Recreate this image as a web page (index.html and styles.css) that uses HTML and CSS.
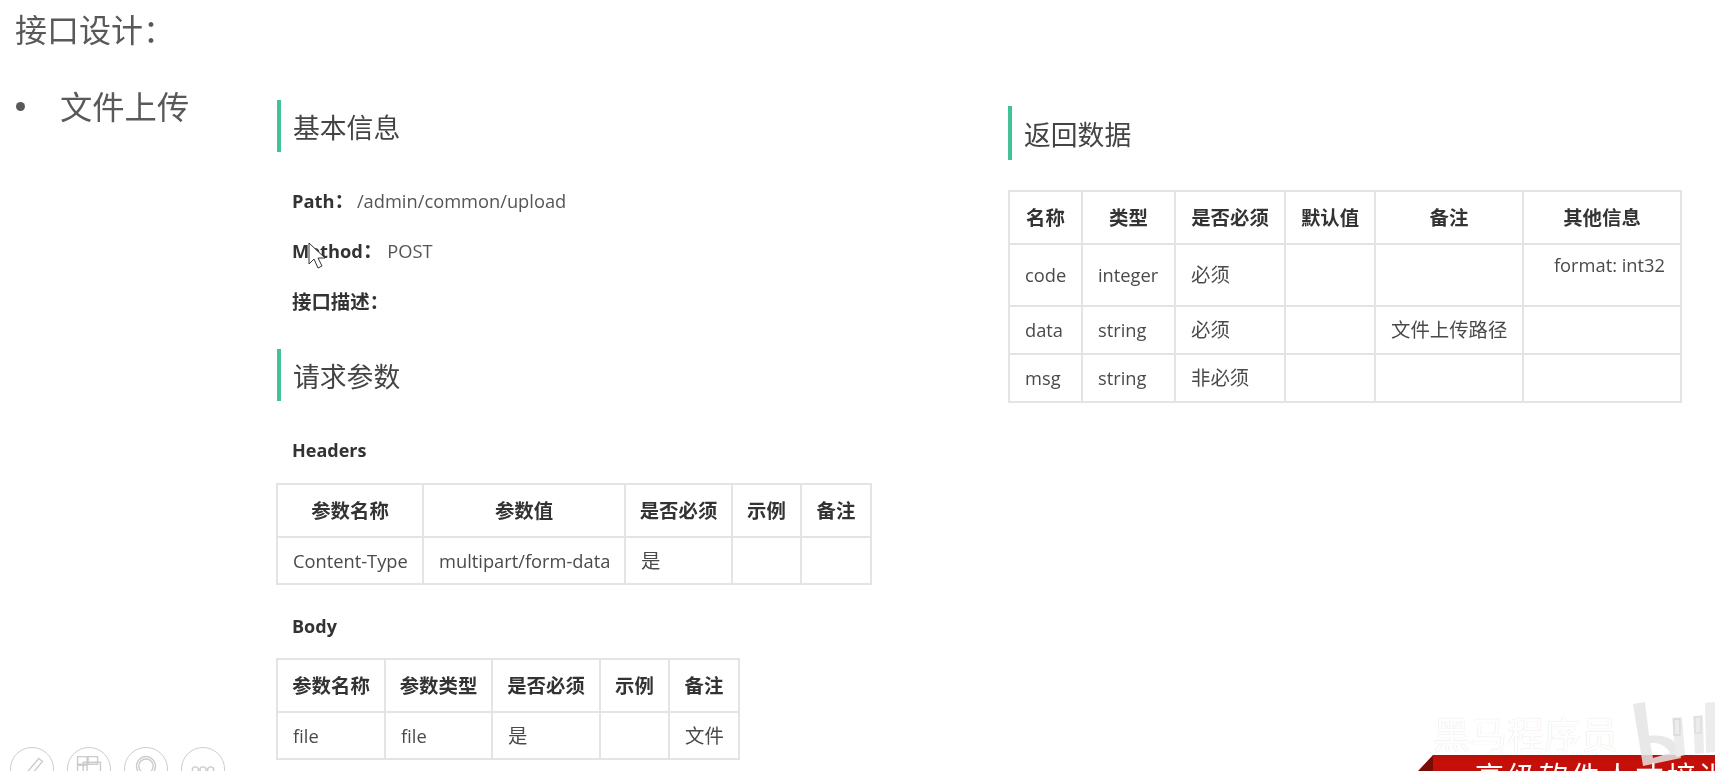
FILE: index.html
```html
<!DOCTYPE html>
<html lang="zh-CN">
<head>
<meta charset="utf-8">
<title>接口设计</title>
<link rel="stylesheet" href="styles.css">
</head>
<body>
<main class="slide">
  <div class="content">
    <h1 class="slide-title">接口设计：</h1>
    <div class="slide-body">
      <aside class="outline">
        <span class="bullet"></span>
        <span class="outline-text">文件上传</span>
      </aside>
      <section class="doc doc-left">
        <h2 class="doc-heading">基本信息</h2>
        <p class="line first"><b>Path<span class="zh">：</span></b><span class="val">/admin/common/upload</span></p>
        <p class="line"><b>Method<span class="zh">：</span></b><span class="val wide">POST</span></p>
        <p class="line last"><b class="zh">接口描述：</b></p>
        <h2 class="doc-heading second">请求参数</h2>
        <p class="sub"><b>Headers</b></p>
        <table class="grid t-headers">
          <colgroup><col class="h1"><col class="h2"><col class="h3"><col class="h4"><col class="h5"></colgroup>
          <thead><tr><th>参数名称</th><th>参数值</th><th>是否必须</th><th>示例</th><th>备注</th></tr></thead>
          <tbody><tr><td>Content-Type</td><td>multipart/form-data</td><td class="zh">是</td><td></td><td></td></tr></tbody>
        </table>
        <p class="sub body-label"><b>Body</b></p>
        <table class="grid t-body">
          <colgroup><col class="b1"><col class="b2"><col class="b3"><col class="b4"><col class="b5"></colgroup>
          <thead><tr><th>参数名称</th><th>参数类型</th><th>是否必须</th><th>示例</th><th>备注</th></tr></thead>
          <tbody><tr><td>file</td><td>file</td><td class="zh">是</td><td></td><td class="zh">文件</td></tr></tbody>
        </table>
      </section>
      <section class="doc doc-right">
        <h2 class="doc-heading">返回数据</h2>
        <table class="grid t-return">
          <colgroup><col class="r1"><col class="r2"><col class="r3"><col class="r4"><col class="r5"><col class="r6"></colgroup>
          <thead><tr><th>名称</th><th>类型</th><th>是否必须</th><th>默认值</th><th>备注</th><th>其他信息</th></tr></thead>
          <tbody>
            <tr class="tall"><td>code</td><td>integer</td><td class="zh">必须</td><td></td><td></td><td class="top">format: int32</td></tr>
            <tr><td>data</td><td>string</td><td class="zh">必须</td><td></td><td class="zh">文件上传路径</td><td></td></tr>
            <tr><td>msg</td><td>string</td><td class="zh">非必须</td><td></td><td></td><td></td></tr>
          </tbody>
        </table>
      </section>
    </div>
  </div>

  <svg class="cursor" width="20" height="30" viewBox="0 0 20 30" aria-hidden="true"><path d="M1 1v21l5-5 4 9 4-2-4-8h7z" fill="#fff" stroke="#333" stroke-width="1"/></svg>

  <div class="tools" aria-hidden="true">
    <span class="tool"><svg viewBox="0 0 44 44"><path d="M14 29 L29 11 L33 14 L18 32 L13 34Z" fill="none" stroke="#ccc" stroke-width="1.5"/></svg></span>
    <span class="tool"><svg viewBox="0 0 44 44"><path d="M10 9h10v8h-10zM21 9h10v8h-10zM10 18h10v10h-10zM16 15h18v18h-18z" fill="none" stroke="#ccc" stroke-width="1.5"/></svg></span>
    <span class="tool"><svg viewBox="0 0 44 44"><circle cx="22" cy="19" r="10" fill="none" stroke="#ccc" stroke-width="1.5"/><circle cx="22" cy="19" r="7.5" fill="none" stroke="#ccc" stroke-width="1.5"/></svg></span>
    <span class="tool"><svg viewBox="0 0 44 44"><circle cx="14" cy="23" r="3.2" fill="none" stroke="#ccc" stroke-width="1.5"/><circle cx="22" cy="23" r="3.2" fill="none" stroke="#ccc" stroke-width="1.5"/><circle cx="30" cy="23" r="3.2" fill="none" stroke="#ccc" stroke-width="1.5"/></svg></span>
  </div>

  <div class="brand">黑马程序员</div>
  <div class="ribbon"><span class="ribbon-fold"></span><span class="ribbon-text">高级软件人才培训</span></div>
  <svg class="bili" width="82" height="69" viewBox="0 0 82 69" aria-hidden="true">
    <path d="M0 2l12-2 4 34c12-2 26 2 30 12l2 10-38 8zM17 41l3 15 17-5c-3-6-11-11-20-10z" fill="#e4e4e4" fill-opacity=".85" fill-rule="evenodd"/>
    <path d="M39 16l10-1 3 38-9 2z" fill="#ececec"/><path d="M60 14l10-1 1 38-9 1z" fill="#ececec"/><path d="M72 1l10-1v50l-9 1z" fill="#ececec"/>
    <rect x="41" y="17" width="6" height="16" fill="none" stroke="#d0d0d0"/><rect x="62" y="15" width="6" height="16" fill="none" stroke="#d8d8d8"/>
  </svg>
</main>
</body>
</html>
```
FILE: styles.css
```css
* { box-sizing: border-box; }
html, body { margin: 0; padding: 0; background: #fff; }
body { font-family: "Open Sans", "Noto Sans CJK SC", sans-serif; color: #333; overflow: hidden; }
.slide { position: relative; width: 1715px; height: 771px; overflow: hidden; }
.content { padding: 8px 0 0 15px; filter: blur(0.35px); }
.slide-title { margin: 0; font-size: 32px; line-height: 44px; font-weight: 400; color: #595959; }
.slide-body { display: flex; align-items: flex-start; margin-top: 48px; }
.outline { width: 262px; display: flex; align-items: center; height: 50px; flex: none; margin-top: -19px; }
.bullet { width: 9px; height: 9px; border-radius: 50%; background: #595959; margin-left: 1px; }
.outline-text { margin-left: 35px; font-size: 32.3px; line-height: 50px; color: #595959; }
.doc { flex: none; }
.doc-left { width: 731px; }
.doc-right { width: 680px; margin-top: 6px; }
.doc-heading { margin: 0; height: 52px; border-left: 4px solid #42c297; padding-left: 12px; font-size: 26.8px; line-height: 56px; font-weight: 400; color: #444; }
.doc-heading.second { margin-top: 37px; }
.doc-right .doc-heading { height: 54px; line-height: 58px; }
.zh { font-size: 19.4px; }
.line { margin: 0 0 0 15px; font-size: 18.3px; line-height: 24px; height: 50px; color: #555; }
.line.first { margin-top: 37px; }
.line.last { height: 23px; padding-top: 1px; }
.line b, .sub b { color: #333; font-weight: 700; }
.val { margin-left: 3px; }
.val.wide { margin-left: 5px; }
.sub { margin: 37px 0 0 15px; font-size: 18px; line-height: 24px; height: 24px; }
.body-label { margin-top: 29px; }
.grid { border-collapse: collapse; table-layout: fixed; font-size: 18.3px; margin-top: 21px; color: #4a4a4a; }
.grid th, .grid td { border: 2px solid #e4e4e4; padding: 0 15px; line-height: 24px; white-space: nowrap; }
.grid th { padding: 0; text-align: center; font-size: 19.4px; font-weight: 700; color: #333; height: 53px; }
.grid td { text-align: left; height: 47px; }
.grid td.zh { font-size: 19.4px; }
.t-headers { width: 594px; margin-left: -1px; }
.t-body { width: 462px; margin-top: 20px; margin-left: -1px; }
.t-return { width: 672px; margin-top: 30px; }
.t-return td { height: 48px; }
.t-return .tall td { height: 62px; }
.t-return td.top { vertical-align: top; padding-top: 8px; text-align: right; }
.h1 { width: 146px; } .h2 { width: 202px; } .h3 { width: 107px; } .h4 { width: 69px; } .h5 { width: 70px; }
.b1 { width: 108px; } .b2 { width: 107px; } .b3 { width: 108px; } .b4 { width: 69px; } .b5 { width: 70px; }
.r1 { width: 73px; } .r2 { width: 93px; } .r3 { width: 110px; } .r4 { width: 90px; } .r5 { width: 148px; } .r6 { width: 158px; }
.cursor { position: absolute; left: 308px; top: 242px; }
.tools { position: absolute; left: 10px; top: 747px; display: flex; gap: 13px; filter: blur(0.4px); }
.tool { width: 44px; height: 44px; border: 1.5px solid #ccc; border-radius: 50%; display: block; }
.tool svg { display: block; width: 100%; height: 100%; }
.brand { position: absolute; left: 1433px; top: 711px; font-size: 37px; line-height: 48px; color: #fff; text-shadow: 0 0 1px #d4d4d4; }
.bili { position: absolute; left: 1633px; top: 702px; }
.ribbon { position: absolute; left: 1433px; top: 755px; width: 282px; height: 30px; background: linear-gradient(#b81008, #c8100a 30%, #b00c08); filter: blur(0.4px); }
.ribbon-fold { position: absolute; left: -15px; top: 0; border-style: solid; border-width: 0 0 16px 15px; border-color: transparent transparent #7a0c06 transparent; }
.ribbon-text { position: absolute; left: 42px; top: 2px; font-family: "Noto Sans CJK SC", sans-serif; font-size: 29px; line-height: 36px; letter-spacing: 3px; color: #fff; white-space: nowrap; }
```
